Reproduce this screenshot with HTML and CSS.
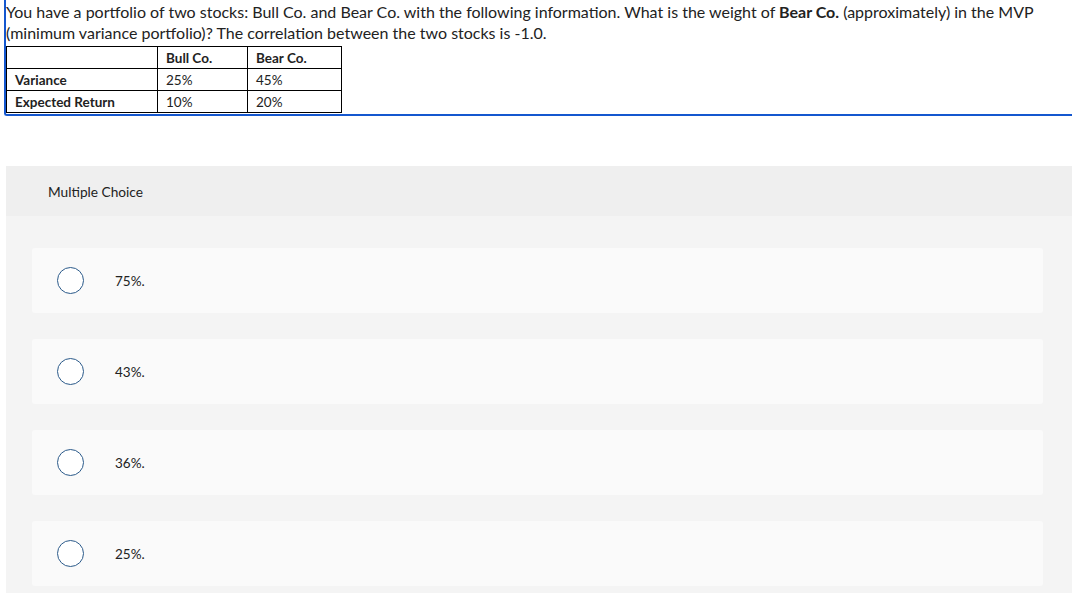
FILE: index.html
```html
<!DOCTYPE html>
<html>
<head>
<meta charset="utf-8">
<link rel="stylesheet" href="styles.css">
</head>
<body>
<div class="question">
  <p class="prompt">You have a portfolio of two stocks: Bull Co. and Bear Co. with the following information. What is the weight of <strong>Bear Co.</strong> (approximately) in the MVP (minimum variance portfolio)? The correlation between the two stocks is -1.0.</p>
  <table class="data">
    <tr><th class="c1"></th><th class="c2">Bull Co.</th><th class="c3">Bear Co.</th></tr>
    <tr><th class="c1">Variance</th><td>25%</td><td>45%</td></tr>
    <tr><th class="c1">Expected Return</th><td>10%</td><td>20%</td></tr>
  </table>
</div>
<div class="panel">
  <div class="panel-head">Multiple Choice</div>
  <div class="panel-body">
    <div class="option"><span class="radio"></span><span class="label">75%.</span></div>
    <div class="option"><span class="radio"></span><span class="label">43%.</span></div>
    <div class="option"><span class="radio"></span><span class="label">36%.</span></div>
    <div class="option"><span class="radio"></span><span class="label">25%.</span></div>
  </div>
</div>
</body>
</html>
```

FILE: styles.css
```css
html, body { margin: 0; padding: 0; background: #fff; }
body {
  font-family: Lato, "Open Sans", sans-serif;
  color: #222;
}
.question {
  margin-left: 4px;
  border-left: 2px solid #1457cf;
  border-bottom: 2px solid #1457cf;
  border-bottom-left-radius: 3px;
  padding-bottom: 1px;
}
.prompt {
  margin: 0;
  padding-top: 1px;
  font-size: 16px;
  line-height: 21px;
}
.prompt strong { font-weight: 700; }
.data {
  margin-top: 3px;
  border-collapse: collapse;
  font-size: 13.5px;
  width: 336px;
}
.data th, .data td {
  border: 1px solid #000;
  height: 21px;
  padding: 0 8px;
  text-align: left;
  font-weight: 400;
}
.data th { font-weight: 700; }
.data .c1 { width: 134px; }
.data .c2 { width: 73px; }
.panel {
  margin: 50px 0 0 6px;
  background: #f4f4f4;
  padding-bottom: 7px;
}
.panel-head {
  height: 50px;
  display: flex;
  align-items: center;
  padding-left: 42px;
  background: #efefef;
  font-size: 13.7px;
}
.panel-body {
  padding: 32px 29px 0 26px;
  display: flex;
  flex-direction: column;
  gap: 26px;
}
.option {
  height: 65px;
  background: #fafafa;
  border-radius: 3px;
  display: flex;
  align-items: center;
  padding-left: 25px;
  font-size: 13.5px;
}
.radio {
  width: 25px;
  height: 25px;
  border: 1.5px solid #2b5a8a;
  border-radius: 50%;
  background: #fff;
  flex: none;
}
.label { margin-left: 31px; }
```
